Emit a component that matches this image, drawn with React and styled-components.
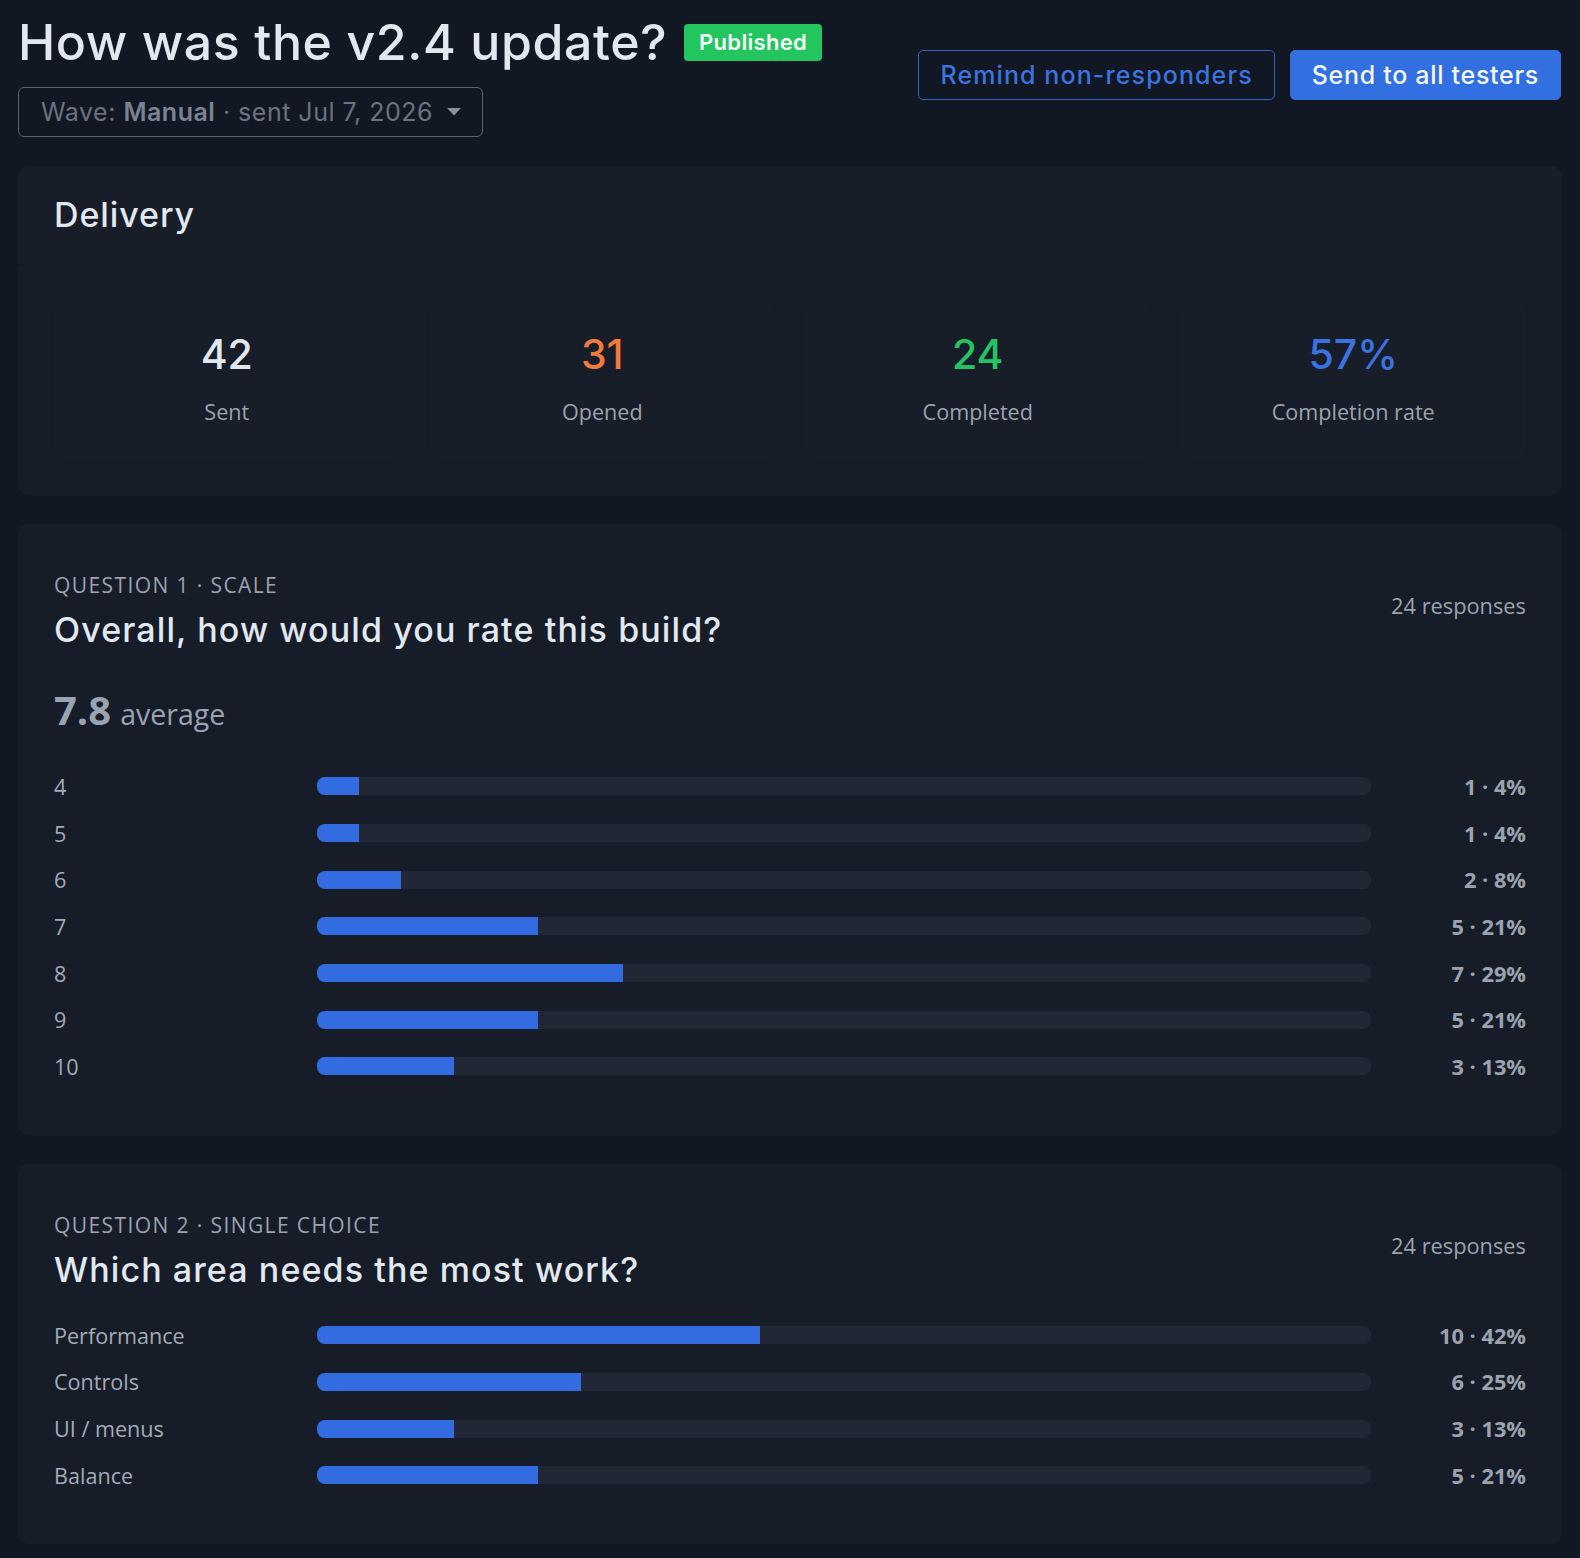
import React from "react";
import styled, { createGlobalStyle } from "styled-components";

// survey results page: header, delivery stats, per-question bar charts

const HEAD_FONT = `"Inter", "Open Sans", sans-serif`;
const BODY_FONT = `"Open Sans", "Noto Sans", sans-serif`;

const GlobalStyle = createGlobalStyle`
  html, body {
    margin: 0;
    padding: 0;
    background: #111723;
  }
  body {
    font-family: ${BODY_FONT};
    color: #e2e8f0;
  }
  * {
    box-sizing: border-box;
  }
`;

const SCALE = [
  { label: "4", count: 1, pct: 4 },
  { label: "5", count: 1, pct: 4 },
  { label: "6", count: 2, pct: 8 },
  { label: "7", count: 5, pct: 21 },
  { label: "8", count: 7, pct: 29 },
  { label: "9", count: 5, pct: 21 },
  { label: "10", count: 3, pct: 13 },
];

const CHOICES = [
  { label: "Performance", count: 10, pct: 42 },
  { label: "Controls", count: 6, pct: 25 },
  { label: "UI / menus", count: 3, pct: 13 },
  { label: "Balance", count: 5, pct: 21 },
];

const STATS = [
  { value: "42", label: "Sent", tone: "plain" },
  { value: "31", label: "Opened", tone: "orange" },
  { value: "24", label: "Completed", tone: "green" },
  { value: "57%", label: "Completion rate", tone: "blue" },
];

const TONES = {
  plain: "#e2e8f0",
  orange: "#ef7a3e",
  green: "#24c463",
  blue: "#3a72df",
};

const Page = styled.div`
  padding: 12px 18px 15px;
  display: flex;
  flex-direction: column;
  gap: 29px;
`;

const Header = styled.header`
  display: flex;
  justify-content: space-between;
  align-items: center;
`;

const TitleBlock = styled.div`
  display: flex;
  flex-direction: column;
  align-items: flex-start;
  gap: 15px;
`;

const TitleRow = styled.div`
  display: flex;
  align-items: center;
  gap: 17px;
`;

const Title = styled.h1`
  margin: 0;
  font-family: ${HEAD_FONT};
  font-size: 50px;
  line-height: 60px;
  font-weight: 500;
  letter-spacing: 0.6px;
  color: #e2e8f0;
`;

const StatusBadge = styled.span`
  display: inline-flex;
  align-items: center;
  height: 37px;
  padding: 0 15px;
  border-radius: 4px;
  background: #22c55e;
  color: #f4fff8;
  font-family: ${HEAD_FONT};
  font-size: 22px;
  font-weight: 600;
  letter-spacing: 0.3px;
`;

const WaveSelect = styled.button`
  display: inline-flex;
  align-items: center;
  gap: 14px;
  height: 50px;
  padding: 0 21px 0 22px;
  border: 1px solid #5b6271;
  border-radius: 6px;
  background: transparent;
  color: #6b7280;
  font-family: ${HEAD_FONT};
  font-size: 25px;
  letter-spacing: 0.5px;
  cursor: pointer;

  b {
    font-weight: 600;
    color: #7b8392;
  }
`;

const Actions = styled.div`
  display: flex;
  gap: 15px;
  margin-right: 1px;
`;

const Button = styled.button`
  height: 50px;
  padding: 0 21px;
  border-radius: 5px;
  font-family: ${HEAD_FONT};
  font-size: 25px;
  font-weight: 500;
  letter-spacing: ${(p) => (p.$primary ? "0.7px" : "1.1px")};
  cursor: pointer;
  border: 1px solid ${(p) => (p.$primary ? "#326fe0" : "#2f63c6")};
  background: ${(p) => (p.$primary ? "#326fe0" : "transparent")};
  color: ${(p) => (p.$primary ? "#f3f7ff" : "#3a74e2")};
`;

const Card = styled.section`
  background: #161c28;
  border-radius: 10px;
  overflow: hidden;
`;

const CardHeader = styled.div`
  padding: 27px 36px 27px;
  background: #171d29;
  border-bottom: 1px solid #141a25;
`;

const CardTitle = styled.h2`
  margin: 0;
  font-family: ${HEAD_FONT};
  font-size: 34px;
  line-height: 44px;
  font-weight: 500;
  letter-spacing: 0.9px;
  color: #e2e8f0;
`;

const StatGrid = styled.div`
  display: grid;
  grid-template-columns: repeat(4, 1fr);
  gap: 30px;
  padding: 39px 36px 37px;
`;

const StatTile = styled.div`
  display: flex;
  flex-direction: column;
  align-items: center;
  padding: 25px 12px 30px;
  border-radius: 8px;
  background: #171d29;
  border: 1px solid #181e2a;
`;

const StatValue = styled.div`
  font-family: ${HEAD_FONT};
  font-size: 41px;
  line-height: 48px;
  font-weight: 500;
  color: ${(p) => TONES[p.$tone]};
`;

const StatLabel = styled.div`
  margin-top: 19px;
  font-size: 21.6px;
  line-height: 30px;
  color: #9ca3af;
`;

const QuestionCard = styled(Card)`
  padding: 47px 36px 45px;
`;

const QuestionHead = styled.div`
  display: flex;
  justify-content: space-between;
  align-items: flex-start;
`;

const Eyebrow = styled.div`
  font-size: 21px;
  line-height: 28px;
  letter-spacing: 1.4px;
  color: #9ca3af;
  text-transform: uppercase;
`;

const QuestionTitle = styled.h3`
  margin: 9px 0 0;
  font-family: ${HEAD_FONT};
  font-size: 34px;
  line-height: 44px;
  font-weight: 500;
  letter-spacing: 1.1px;
  color: #e2e8f0;
`;

const ResponseCount = styled.div`
  margin-top: 20px;
  font-size: 21.8px;
  line-height: 30px;
  color: #9ca3af;
`;

const Average = styled.div`
  display: flex;
  align-items: baseline;
  gap: 9px;
  margin: 30px 0 25px;
  height: 56px;
  line-height: 56px;
  color: #9aa3b1;
`;

const AverageValue = styled.span`
  font-size: 40px;
  font-weight: 700;
`;

const AverageUnit = styled.span`
  font-size: 28.5px;
`;

const BarList = styled.div`
  margin-top: 20px;
  display: flex;
  flex-direction: column;
`;

const BarRow = styled.div`
  display: grid;
  grid-template-columns: 263px 1fr 155px;
  align-items: center;
  height: 46.7px;
`;

const BarLabel = styled.div`
  font-size: 21.6px;
  color: #a3abb8;
`;

const Track = styled.div`
  height: 18px;
  border-radius: 8px;
  background: #212734;
  overflow: hidden;
`;

const Fill = styled.div`
  height: 100%;
  background: #326ce0;
`;

const BarValue = styled.div`
  text-align: right;
  font-size: 21.8px;
  font-weight: 700;
  color: #9ca3af;
`;

const Caret = () => (
  <svg width="14" height="8" viewBox="0 0 14 8" aria-hidden="true">
    <path d="M0 0h14L7 7.5z" fill="#8a919e" />
  </svg>
);

const Bars = ({ rows }) => (
  <BarList>
    {rows.map((row) => (
      <BarRow key={row.label}>
        <BarLabel>{row.label}</BarLabel>
        <Track>
          <Fill style={{ width: `${row.pct}%` }} />
        </Track>
        <BarValue>
          {row.count} · {row.pct}%
        </BarValue>
      </BarRow>
    ))}
  </BarList>
);

const Question = ({ eyebrow, title, responses, average, rows }) => (
  <QuestionCard>
    <QuestionHead>
      <div>
        <Eyebrow>{eyebrow}</Eyebrow>
        <QuestionTitle>{title}</QuestionTitle>
      </div>
      <ResponseCount>{responses} responses</ResponseCount>
    </QuestionHead>
    {average && (
      <Average>
        <AverageValue>{average}</AverageValue>
        <AverageUnit>average</AverageUnit>
      </Average>
    )}
    <Bars rows={rows} />
  </QuestionCard>
);

const App = () => {
  return (
    <>
      <GlobalStyle />
      <Page>
        <Header>
          <TitleBlock>
            <TitleRow>
              <Title>How was the v2.4 update?</Title>
              <StatusBadge>Published</StatusBadge>
            </TitleRow>
            <WaveSelect type="button">
              <span>
                Wave: <b>Manual</b> · sent Jul 7, 2026
              </span>
              <Caret />
            </WaveSelect>
          </TitleBlock>
          <Actions>
            <Button type="button">Remind non-responders</Button>
            <Button type="button" $primary>
              Send to all testers
            </Button>
          </Actions>
        </Header>

        <Card>
          <CardHeader>
            <CardTitle>Delivery</CardTitle>
          </CardHeader>
          <StatGrid>
            {STATS.map((s) => (
              <StatTile key={s.label}>
                <StatValue $tone={s.tone}>{s.value}</StatValue>
                <StatLabel>{s.label}</StatLabel>
              </StatTile>
            ))}
          </StatGrid>
        </Card>

        <Question
          eyebrow="Question 1 · Scale"
          title="Overall, how would you rate this build?"
          responses={24}
          average="7.8"
          rows={SCALE}
        />

        <Question
          eyebrow="Question 2 · Single choice"
          title="Which area needs the most work?"
          responses={24}
          rows={CHOICES}
        />
      </Page>
    </>
  );
};

export default App;
